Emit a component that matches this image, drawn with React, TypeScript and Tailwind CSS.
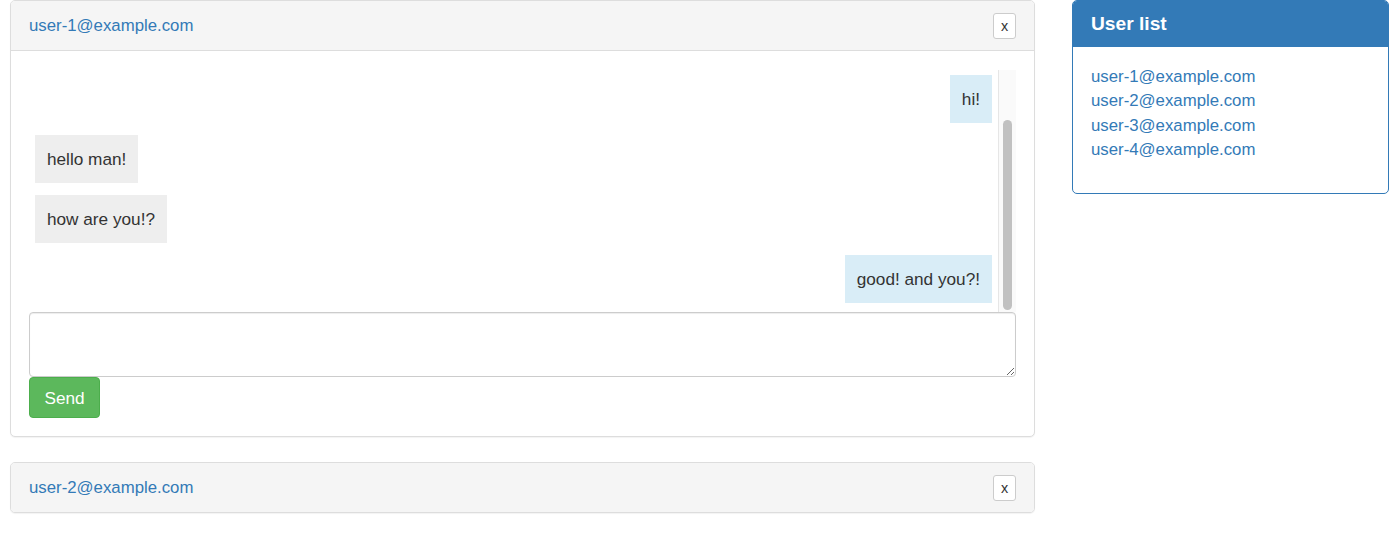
import React from "react";

const font = { fontFamily: '"Liberation Sans", Arial, Helvetica, sans-serif' };

type Msg = { text: string; mine: boolean };

const messages: Msg[] = [
  { text: "hi!", mine: true },
  { text: "hello man!", mine: false },
  { text: "how are you!?", mine: false },
  { text: "good! and you?!", mine: true },
];

function CloseBtn() {
  return (
    <button className="h-[26px] w-[23px] rounded-[3px] border border-[#cccccc] bg-white text-[14.4px] leading-[20px] text-[#333] flex items-center justify-center">
      x
    </button>
  );
}

function ChatPanel({ user, open }: { user: string; open: boolean }) {
  return (
    <div className="rounded-[5px] border border-[#dddddd] bg-white shadow-[0_1px_1px_rgba(0,0,0,0.05)]">
      <div
        className={`flex items-center justify-between bg-[#f5f5f5] px-[18px] ${
          open ? "h-[50px] border-b border-[#dddddd] rounded-t-[4px]" : "h-[49px] rounded-[4px]"
        }`}
      >
        <a className="text-[16.8px] leading-[24px] text-[#337ab7]">{user}</a>
        <CloseBtn />
      </div>
      {open && (
        <div className="px-[18px] pt-[19px] pb-[18px]">
          <div className="flex h-[242px]">
            <div className="flex-1 overflow-hidden">
              {messages.map((m, i) => (
                <div
                  key={i}
                  className={`flex px-[6px] ${i === 0 ? "pt-[5px]" : "pt-[6px]"} pb-[6px] ${
                    m.mine ? "justify-end" : "justify-start"
                  }`}
                >
                  <div
                    className={`flex h-[48px] items-center px-[12px] text-[17.2px] leading-[24px] text-[#333] ${
                      m.mine ? "bg-[#d9edf7]" : "bg-[#eeeeee]"
                    }`}
                  >
                    {m.text}
                  </div>
                </div>
              ))}
            </div>
            <div className="flex w-[18px] flex-col border-l border-[#e6e6e6] bg-[#fafafa] px-[4px] pt-[50px] pb-[2px]">
              <div className="h-[190px] w-[9px] rounded-full bg-[#c1c1c1]" />
            </div>
          </div>
          <textarea className="block h-[65px] w-full rounded-[4px] border border-[#cccccc] shadow-[inset_0_1px_1px_rgba(0,0,0,0.075)] outline-none" />
          <button className="h-[41px] w-[71px] rounded-[4px] border border-[#4cae4c] bg-[#5cb85c] text-[17.2px] leading-[24px] text-white">
            Send
          </button>
        </div>
      )}
    </div>
  );
}

export default function App() {
  return (
    <div className="min-h-[546px] bg-white text-[#333]" style={font}>
      <div className="flex gap-[37px] pl-[10px] pr-[11px]">
        <div className="flex w-[1025px] flex-col gap-[25px]">
          <ChatPanel user="user-1@example.com" open={true} />
          <ChatPanel user="user-2@example.com" open={false} />
        </div>
        <div className="h-[194px] w-[317px] rounded-[5px] border border-[#337ab7] bg-white">
          <div className="flex h-[46px] items-center bg-[#337ab7] px-[18px] rounded-t-[4px]">
            <h3 className="text-[19.2px] font-semibold leading-[22px] text-white">User list</h3>
          </div>
          <div className="px-[18px] pt-[18px]">
            <ul className="flex flex-col">
              {["user-1@example.com", "user-2@example.com", "user-3@example.com", "user-4@example.com"].map((u) => (
                <li key={u}>
                  <a className="text-[16.8px] leading-[24.4px] text-[#337ab7]">{u}</a>
                </li>
              ))}
            </ul>
          </div>
        </div>
      </div>
    </div>
  );
}
